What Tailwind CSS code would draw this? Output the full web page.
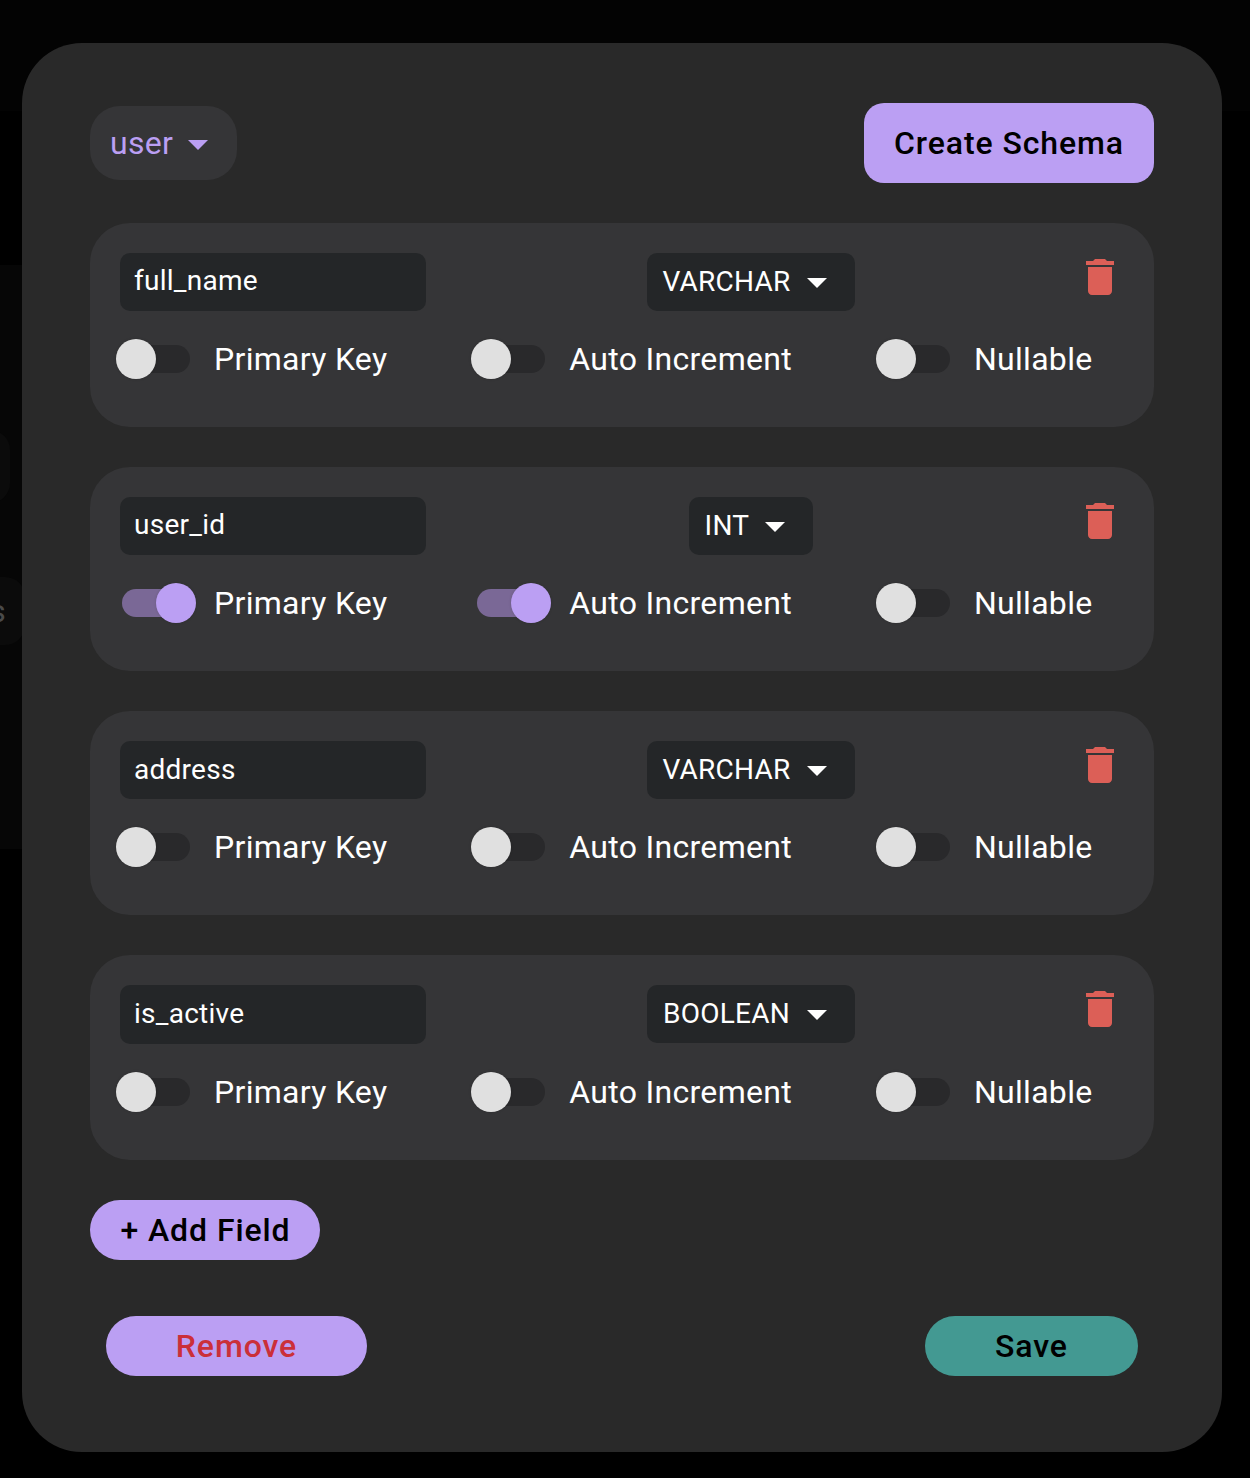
<!DOCTYPE html>
<html lang="en">
<head>
<meta charset="utf-8">
<title>Create Schema</title>
<script src="https://cdn.jsdelivr.net/npm/@tailwindcss/browser@4"></script>
</head>
<body class="relative h-[1478px] w-[1250px] overflow-hidden bg-black font-['Roboto',sans-serif] text-[32px] leading-[48px] tracking-[0.00938em] text-white">
  <!-- dimmed page behind the dialog -->
  <div class="absolute left-0 top-0 h-[111px] w-full bg-[#030303]"></div>
  <div class="absolute left-0 top-[265px] h-[584px] w-[100px] bg-[#060606]"></div>
  <div class="absolute left-[-60px] top-[430px] h-[73px] w-[70px] rounded-[20px] bg-[#0b0b0b]"></div>
  <div class="absolute left-[-76px] top-[577px] flex h-[68px] w-[101px] items-center justify-end rounded-[20px] bg-[#0b0b0b] pr-[19px] text-[#4a4a4a]">s</div>

  <main class="relative ml-[22px] mt-[43px] flex h-[1409px] w-[1200px] flex-col rounded-[60px] bg-[#292929] px-[68px] pt-[60px]">
    <header class="flex h-20 items-center justify-between">
      <div class="flex h-[74px] w-[147px] items-center justify-between rounded-[30px] bg-[#353537] pl-5 pr-[15px] text-[#bb9ff3]">
        <span>user</span>
        <svg class="relative top-px size-12 shrink-0" viewBox="0 0 24 24" fill="currentColor"><path d="M7 10l5 5 5-5z"/></svg>
      </div>
      <button class="h-20 w-[290px] rounded-[20px] bg-[#bb9ff3] font-medium tracking-[0.02857em] text-black">Create Schema</button>
    </header>

    <div id="fields" class="mt-10 flex flex-col gap-10"></div>

    <button class="mt-10 h-[60px] w-[230px] rounded-[30px] bg-[#bb9ff3] pl-px font-medium tracking-[0.02857em] text-black">+ Add Field</button>

    <footer class="mt-14 flex justify-between px-4">
      <button class="h-[60px] w-[261px] rounded-[30px] bg-[#bb9ff3] font-medium tracking-[0.02857em] text-[#cb2f39]">Remove</button>
      <button class="h-[60px] w-[213px] rounded-[30px] bg-[#439992] font-medium tracking-[0.02857em] text-black">Save</button>
    </footer>
  </main>

<script>
  const fields = [
    { name: 'full_name', type: 'VARCHAR', on: [] },
    { name: 'user_id', type: 'INT', on: ['Primary Key', 'Auto Increment'] },
    { name: 'address', type: 'VARCHAR', on: [], low: true },
    { name: 'is_active', type: 'BOOLEAN', on: [], tall: true },
  ];

  const toggle = (label, on) => `
    <label class="flex h-[76px] items-center ${label === 'Nullable' ? 'pr-[31.500px]' : 'pr-8'}">
      <span class="flex h-[76px] w-[116px] items-center px-6">
        <span class="flex h-7 w-[68px] items-center rounded-full ${on ? 'justify-end bg-[#7a6896]' : 'justify-start bg-[#29292b]'}">
          <span class="size-10 shrink-0 rounded-full shadow-[0_0_3px_rgba(0,0,0,0.15)] ${on ? '-mr-1.5 bg-[#bb9ff3]' : '-ml-1.5 bg-[#e0e0e0]'}"></span>
        </span>
      </span>
      <span>${label}</span>
    </label>`;

  const card = f => `
    <section class="rounded-[40px] bg-[#353537] p-[30px] ${f.tall ? 'h-[205px]' : 'h-[204px]'}">
      <div class="flex items-start justify-between text-[28px] tracking-[0.00938em]">
        <div class="flex w-[306px] items-center rounded-[10px] bg-[#242628] pl-3.5 ${f.low ? 'pb-0' : 'pb-0.5'} ${f.tall ? 'h-[59px]' : 'h-[58px]'}">${f.name}</div>
        <div class="flex h-[58px] items-center justify-between rounded-[10px] bg-[#242628] pr-3.5 ${f.type === 'INT' ? 'w-[124px]' : 'w-[208px]'} ${f.type === 'BOOLEAN' ? 'pl-4' : 'pl-[15.500px]'}">
          <span>${f.type}</span>
          <svg class="size-12 shrink-0" viewBox="0 0 24 24" fill="currentColor"><path d="M7 10l5 5 5-5z"/></svg>
        </div>
        <svg class="size-12 shrink-0 text-[#dc5f57]" viewBox="0 0 24 24" fill="currentColor"><path d="M6 19c0 1.100.9 2 2 2h8c1.100 0 2-.9 2-2V7H6v12zM19 4h-3.500l-1-1h-5l-1 1H5v2h14V4z"/></svg>
      </div>
      <div class="-ml-[22px] mt-2.5 flex justify-between">
        ${['Primary Key', 'Auto Increment', 'Nullable'].map(l => toggle(l, f.on.includes(l))).join('')}
      </div>
    </section>`;

  document.getElementById('fields').innerHTML = fields.map(card).join('');
</script>
</body>
</html>
